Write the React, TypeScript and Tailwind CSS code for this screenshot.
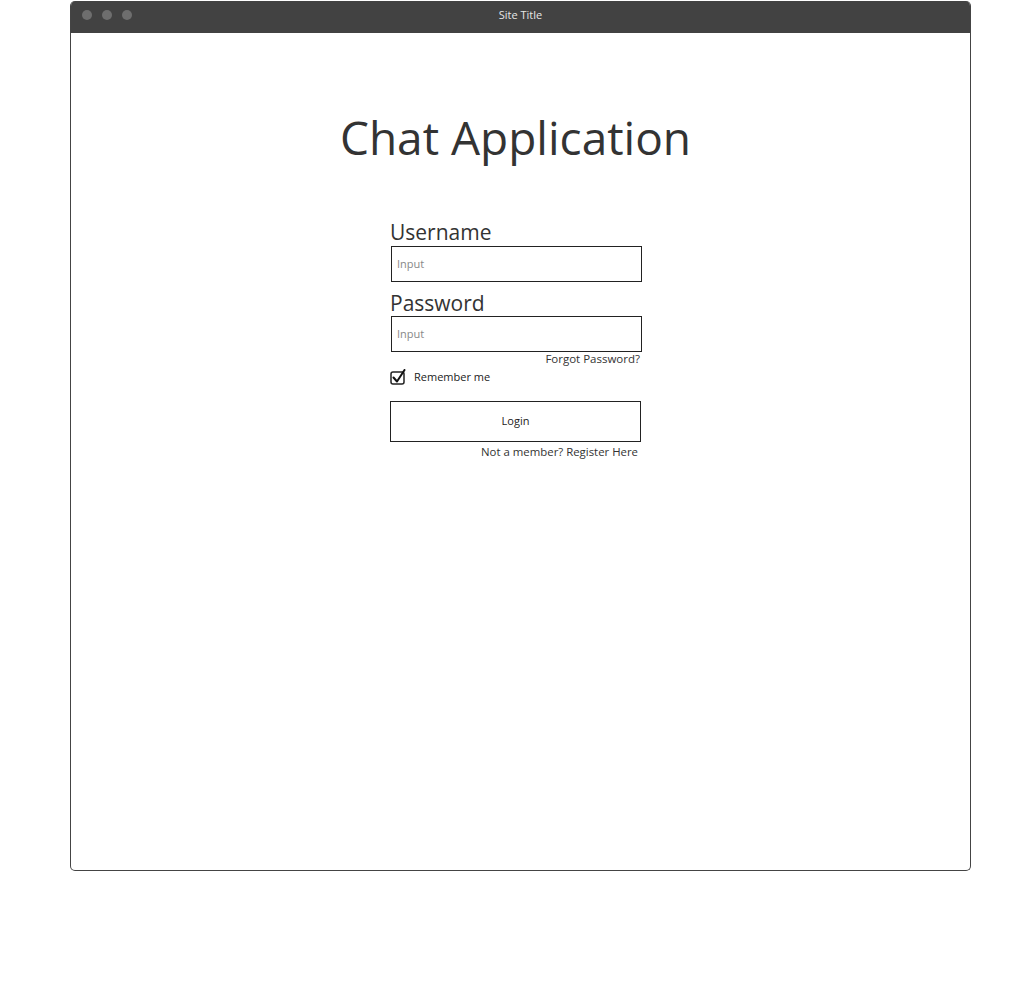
import React from "react";

const font = { fontFamily: '"Source Sans Pro", "Open Sans", "Noto Sans", sans-serif' };

function CheckBox() {
  return (
    <svg width="16" height="16" viewBox="0 0 16 16" className="shrink-0">
      <rect x="1" y="3" width="13" height="12" rx="2" fill="white" stroke="#222" strokeWidth="1.5" />
      <path d="M3.5 8.5 L7 12.5 L14.5 1" fill="none" stroke="#111" strokeWidth="2" strokeLinecap="round" strokeLinejoin="round" />
    </svg>
  );
}

export default function App() {
  return (
    <div className="bg-white min-h-screen pt-px" style={font}>
      <div className="ml-[70px] w-[901px] h-[870px] border border-[#444] border-t-0 rounded-[5px] overflow-hidden flex flex-col">
        <div className="h-[32px] bg-[#424242] flex items-center relative shrink-0 pb-[4px]">
          <div className="flex gap-[10px] pl-[11px]">
            <span className="w-[10px] h-[10px] rounded-full bg-[#6e6e6e]" />
            <span className="w-[10px] h-[10px] rounded-full bg-[#6e6e6e]" />
            <span className="w-[10px] h-[10px] rounded-full bg-[#6e6e6e]" />
          </div>
          <div className="absolute inset-0 flex items-center justify-center pb-[4px] text-[11px] text-[#e6e6e6]">
            Site Title
          </div>
        </div>

        <div className="flex-1 flex flex-col">
          <h1 className="text-center pr-[10px] mt-[74px] text-[46px] leading-[60px] text-[#333]">
            Chat Application
          </h1>

          <div className="ml-[319px] w-[252px] mt-[52px] text-[#333]">
            <div className="text-[21px] leading-[27px]">Username</div>
            <div className="h-[36px] border-[1.5px] border-[#222] flex items-center pl-[5px] text-[11px] text-[#888] ml-px">
              Input
            </div>
            <div className="text-[21px] leading-[26px] mt-[8px]">Password</div>
            <div className="h-[36px] border-[1.5px] border-[#222] flex items-center pl-[5px] text-[11px] text-[#888] ml-px">
              Input
            </div>
            <div className="text-right text-[11.5px] leading-[16px] -mt-px pr-[2px]">Forgot Password?</div>
            <div className="flex items-center gap-[8px] mt-[2px]">
              <CheckBox />
              <span className="text-[11px] text-[#222]">Remember me</span>
            </div>
            <div className="mt-[15px] w-[251px] h-[41px] border-[1.5px] border-[#222] flex items-center justify-center text-[11px] text-[#222]">
              Login
            </div>
            <div className="text-right text-[11.4px] leading-[16px] mt-[2px] pr-[4px]">Not a member? Register Here</div>
          </div>
        </div>
      </div>
    </div>
  );
}
